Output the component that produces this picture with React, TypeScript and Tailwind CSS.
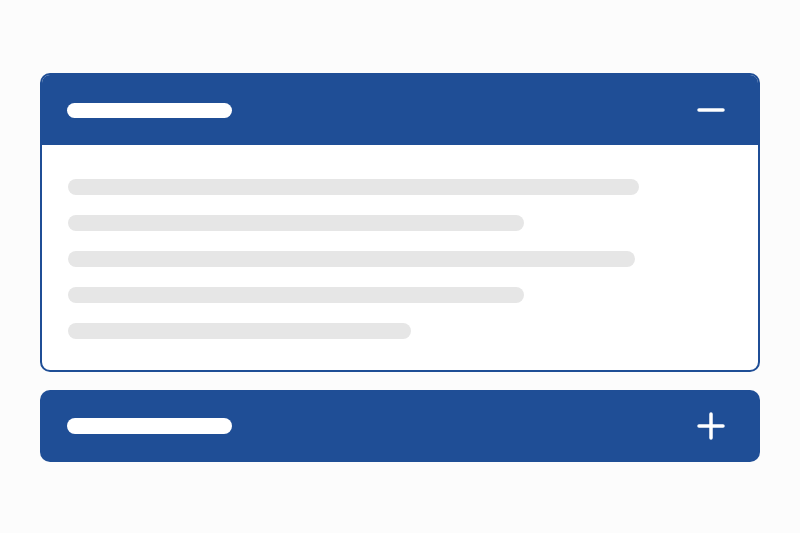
import { useState } from 'react';

// Skeleton accordion: blue header bars with a title placeholder and a +/− toggle,
// the open panel shows grey line placeholders.

const LINES = [571, 456, 567, 456, 343];

function ToggleIcon({ open }: { open: boolean }) {
  return (
    <svg width="28" height="28" viewBox="0 0 28 28" fill="none" aria-hidden="true">
      <path d="M2 14h24" stroke="white" strokeWidth="3.5" strokeLinecap="round" />
      {!open && <path d="M14 2v24" stroke="white" strokeWidth="3.5" strokeLinecap="round" />}
    </svg>
  );
}

export default function App() {
  const [open, setOpen] = useState<number>(0);

  return (
    <div className="flex min-h-screen items-center justify-center bg-[#fcfcfc] pt-[2px]">
      <div className="flex w-[720px] flex-col gap-[18px]">
        {[0, 1].map((i) =>
          open === i ? (
            <div key={i} className="overflow-hidden rounded-[10px] border-2 border-[#1f4e96] bg-white">
              <button
                onClick={() => setOpen(-1)}
                className="flex h-[70px] w-full items-center justify-between bg-[#1f4e96] pl-[25px] pr-[33px]"
              >
                <span className="h-[15px] w-[165px] rounded-full bg-white" />
                <ToggleIcon open />
              </button>
              <div className="flex flex-col gap-5 pb-[31px] pl-[26px] pt-[34px]">
                {LINES.map((w, j) => (
                  <span key={j} className="h-4 rounded-full bg-[#e6e6e6]" style={{ width: w }} />
                ))}
              </div>
            </div>
          ) : (
            <button
              key={i}
              onClick={() => setOpen(i)}
              className="flex h-[72px] w-full items-center justify-between rounded-[10px] bg-[#1f4e96] pl-[27px] pr-[35px]"
            >
              <span className="h-4 w-[165px] rounded-full bg-white" />
              <ToggleIcon open={false} />
            </button>
          ),
        )}
      </div>
    </div>
  );
}
